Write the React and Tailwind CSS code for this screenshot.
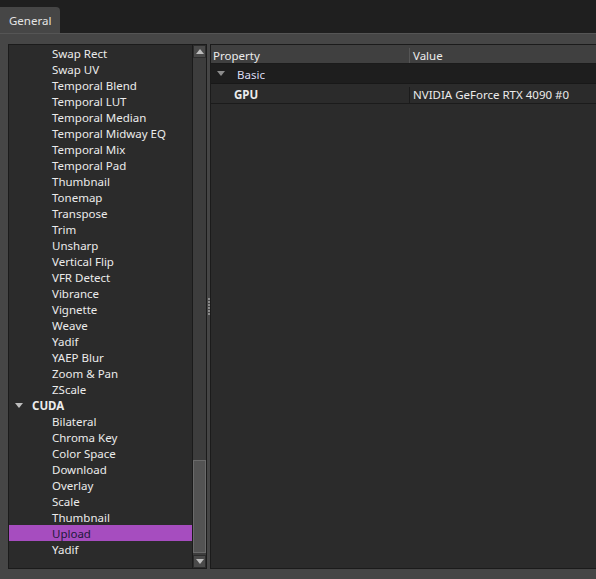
const effects = [
  'Swap Rect',
  'Swap UV',
  'Temporal Blend',
  'Temporal LUT',
  'Temporal Median',
  'Temporal Midway EQ',
  'Temporal Mix',
  'Temporal Pad',
  'Thumbnail',
  'Tonemap',
  'Transpose',
  'Trim',
  'Unsharp',
  'Vertical Flip',
  'VFR Detect',
  'Vibrance',
  'Vignette',
  'Weave',
  'Yadif',
  'YAEP Blur',
  'Zoom & Pan',
  'ZScale'
];

const cudaEffects = ['Bilateral', 'Chroma Key', 'Color Space', 'Download', 'Overlay', 'Scale', 'Thumbnail', 'Upload', 'Yadif'];

const Caret = ({ className = '' }) => (
  <svg width="8" height="5" viewBox="0 0 8 5" className={className}>
    <path d="M0 0 L8 0 L4 5 Z" fill="currentColor" />
  </svg>
);

const TreeRow = ({ label, selected }) => (
  <div
    className={`flex h-4 items-center pl-[43px] pt-[2px] ${
      selected ? 'bg-[#a64dbf] text-[#1c1a3a]' : 'text-[#ececec]'
    }`}
  >
    {label}
  </div>
);

const ScrollButton = ({ down }) => (
  <div className="flex h-[13px] items-center justify-center border border-[#2c2c2c] bg-[#4a4a4a] text-[#bdbdbd]">
    <Caret className={down ? '' : 'rotate-180'} />
  </div>
);

export default function App() {
  return (
    <div
      className="flex h-[579px] w-[596px] flex-col overflow-hidden bg-[#464646] text-[11.5px] leading-4"
      style={{ fontFamily: '"Noto Sans", "Open Sans", sans-serif' }}
    >
      {/* tab strip */}
      <div className="flex h-[34px] items-end border-b border-[#555] bg-[#1f1f1f]">
        <div className="flex h-[26px] w-[60px] items-center rounded-tr-[4px] bg-[#464646] pl-[9px] pt-[2px] text-[#e4e4e4]">
          General
        </div>
      </div>

      <div className="flex min-h-0 flex-1 pb-[10px] pl-2 pt-[10px]">
        {/* effect tree */}
        <div className="flex w-[199px] border border-[#1b1b1b] bg-[#2b2b2b]">
          <div className="min-w-0 flex-1 overflow-hidden">
            {effects.map((name) => (
              <TreeRow key={name} label={name} />
            ))}
            <div className="flex h-4 items-center font-bold text-[#ececec]">
              <Caret className="ml-[6px] mr-[9px] text-[#bdbdbd]" />
              <span className="pt-[2px]">CUDA</span>
            </div>
            {cudaEffects.map((name) => (
              <TreeRow key={name} label={name} selected={name === 'Upload'} />
            ))}
          </div>
          <div className="flex w-[14px] flex-col border-l border-[#1b1b1b] bg-[#3d3d3d]">
            <ScrollButton />
            <div className="flex flex-1 flex-col">
              <div className="mb-[2px] mt-auto h-[93px] border border-[#6a6a6a] bg-[#535353]" />
            </div>
            <ScrollButton down />
          </div>
        </div>

        {/* splitter */}
        <div className="flex w-[3px] flex-col items-center justify-center gap-[1px]">
          {[0, 1, 2, 3, 4, 5].map((i) => (
            <div key={i} className="h-[2px] w-[2px] bg-[#8a8a8a]" />
          ))}
        </div>

        {/* property grid */}
        <div className="flex min-w-0 flex-1 flex-col border-y border-l border-[#1b1b1b] bg-[#2b2b2b] text-[#ececec]">
          <div className="flex h-[19px] border-b border-[#1b1b1b] bg-[#404040] pt-[3px]">
            <div className="flex w-[199px] items-center border-r border-[#555] pl-[2px]">Property</div>
            <div className="flex flex-1 items-center pl-[3px]">Value</div>
          </div>
          <div className="flex h-5 items-center border-b border-[#181818] bg-[#1e1e1e]">
            <Caret className="ml-[6px] mr-[12px] text-[#8c8c8c]" />
            <span className="pt-[3px] text-[#dcdcf4]">Basic</span>
          </div>
          <div className="flex h-5 border-b border-[#1b1b1b] pt-[3px]">
            <div className="flex w-[199px] items-center border-r border-[#1b1b1b] pl-[23px] font-bold">GPU</div>
            <div className="flex flex-1 items-center pl-[3px]">NVIDIA GeForce RTX 4090 #0</div>
          </div>
        </div>
      </div>
    </div>
  );
}
